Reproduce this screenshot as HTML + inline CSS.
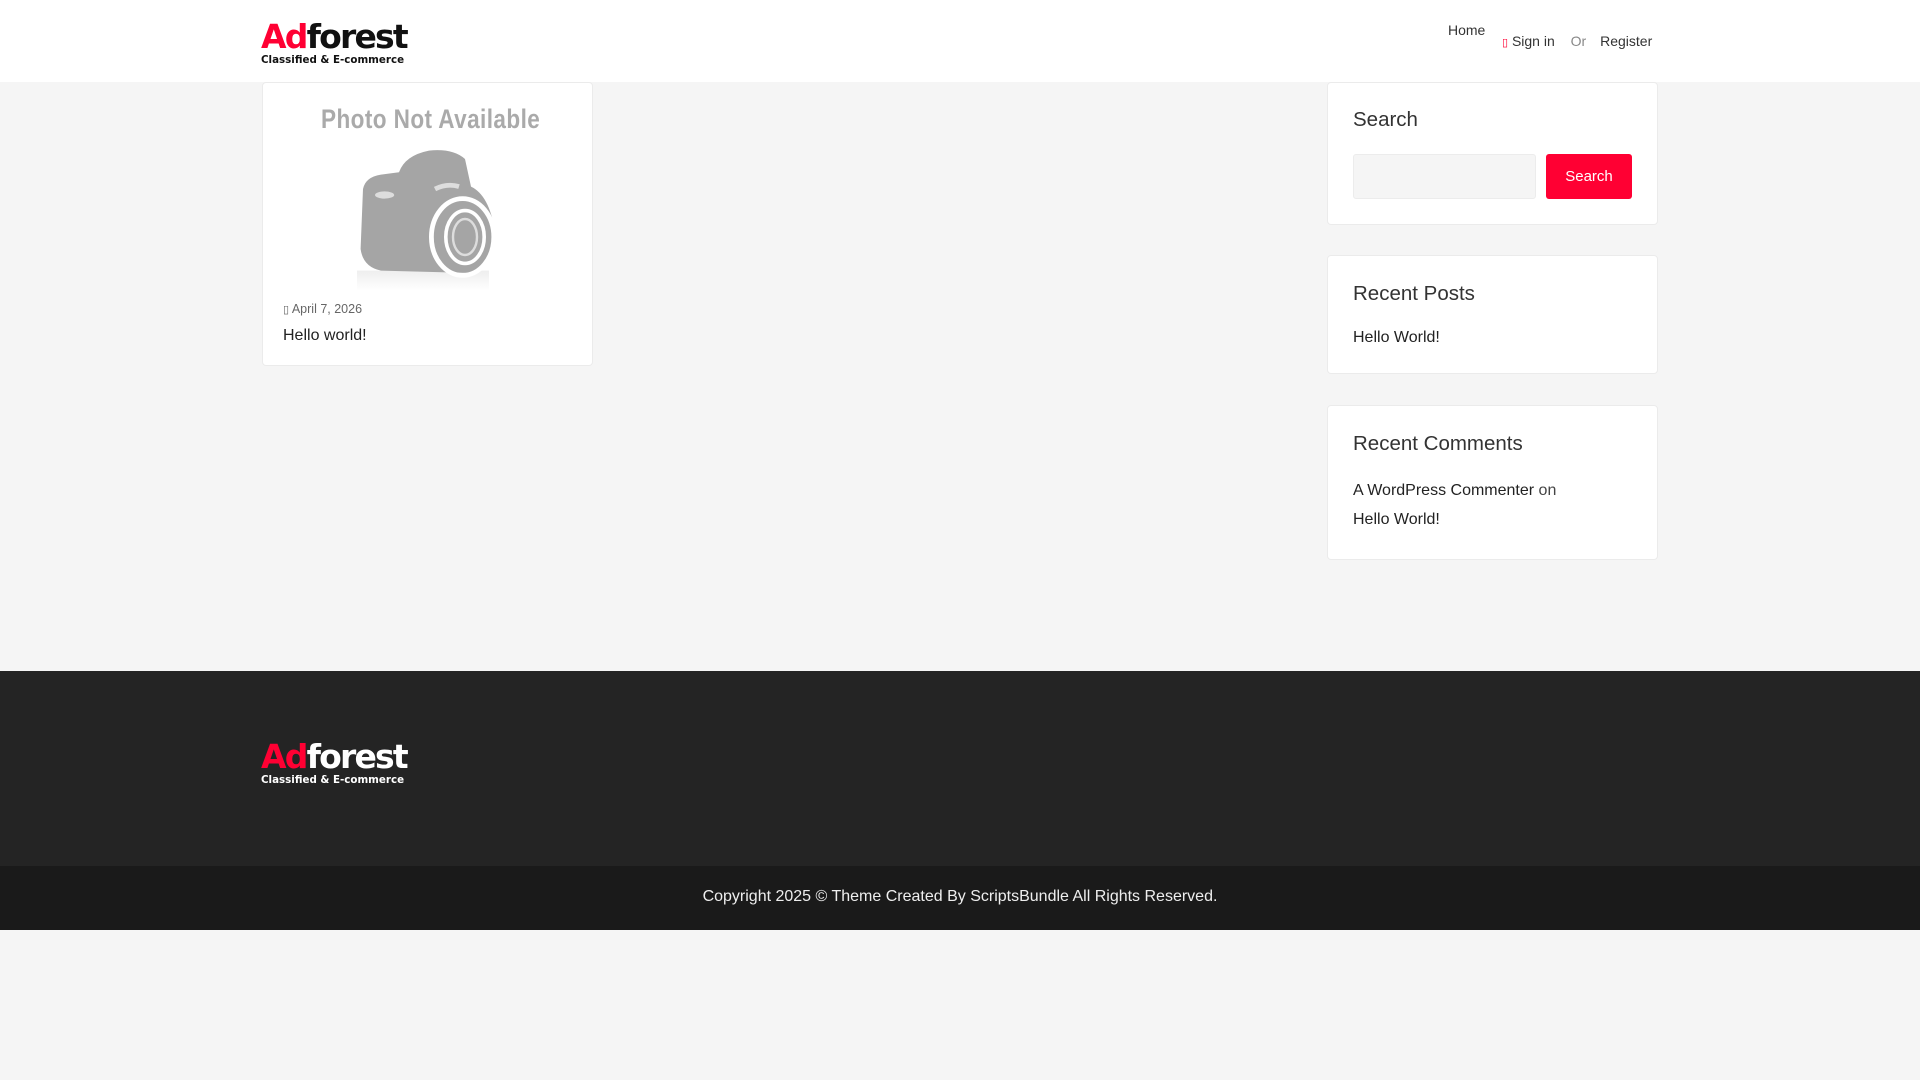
<!DOCTYPE html>
<html><head><meta charset="utf-8"><style>
*{margin:0;padding:0;box-sizing:border-box}
body{width:1920px;height:1080px;background:#f5f5f5;font-family:"Liberation Sans",Arial,sans-serif;position:relative;overflow:hidden;color:#222}
.a{position:absolute;white-space:nowrap}
.card{position:absolute;background:#fff;border:1px solid #ebebeb;border-radius:4px}
.logo .t{font-family:"DejaVu Sans",sans-serif;font-weight:bold;font-size:33px;letter-spacing:-1.8px;line-height:30px}
.logo .s{font-family:"DejaVu Sans",sans-serif;font-size:10.3px;line-height:13px;font-weight:bold;letter-spacing:0px;margin-top:2px}
h3{font-weight:normal;font-size:20.5px;color:#333;position:absolute;white-space:nowrap}
.lk{font-size:16px;color:#222;position:absolute;white-space:nowrap}
</style></head><body>
<div class="a" style="left:0;top:0;width:1920px;height:82px;background:#fff"></div>
<div class="a logo" style="left:261px;top:22px">
<div class="t"><span style="color:#ff0033">Ad</span><span style="color:#111">forest</span></div>
<div class="s" style="color:#111">Classified &amp; E-commerce</div></div>
<div class="a" style="left:1448px;top:22px;font-size:14px;color:#333">Home</div>
<div class="a" style="left:1502px;top:33px;font-size:14px;color:#333"><span style="color:#ff0033;font-size:11px">▯</span> Sign in <span style="color:#888;margin:0 10px 0 12px">Or</span> Register</div>

<div class="card" style="left:262px;top:82px;width:331px;height:284px"></div>
<div class="a" style="left:321px;top:104px;font-size:27px;font-weight:bold;color:#aaa;transform:scaleX(0.835);transform-origin:left;letter-spacing:0.5px">Photo Not Available</div>
<svg class="a" style="left:339px;top:141px" width="168" height="150" viewBox="0 0 140 125">
<defs><linearGradient id="g" x1="0" y1="0" x2="0" y2="1"><stop offset="0" stop-color="#eee"/><stop offset="1" stop-color="#fff"/></linearGradient></defs>
<rect x="15" y="108" width="110" height="17" fill="url(#g)"/>
<path d="M20 40 Q22 30 35 28 L50 26 Q55 12 75 8 Q95 6 105 15 L110 38 Q125 45 130 75 Q128 105 110 110 L35 108 Q20 105 18 90 Z" fill="#a5a5a5"/>
<ellipse cx="103" cy="80" rx="26" ry="32" fill="none" stroke="#fff" stroke-width="4"/>
<ellipse cx="105" cy="80" rx="16" ry="22" fill="none" stroke="#fff" stroke-width="3"/>
<ellipse cx="105" cy="80" rx="10" ry="15" fill="#a5a5a5" stroke="#ddd" stroke-width="2"/>
<ellipse cx="38" cy="45" rx="8" ry="3" fill="#ddd"/>
<path d="M80 40 Q90 35 100 38" stroke="#ddd" stroke-width="4" fill="none"/>
</svg>
<div class="a" style="left:283px;top:302px;font-size:12.5px;color:#666"><span style="font-size:11px">▯</span> April 7, 2026</div>
<div class="a" style="left:283px;top:327px;font-size:16px;color:#222">Hello world!</div>

<div class="card" style="left:1327px;top:82px;width:331px;height:143px"></div>
<h3 style="left:1353px;top:108px">Search</h3>
<div class="a" style="left:1353px;top:154px;width:183px;height:45px;background:#f5f5f5;border:1px solid #ececec;border-radius:3px"></div>
<div class="a" style="left:1546px;top:154px;width:86px;height:45px;background:#ff0033;border-radius:3px;color:#fff;font-size:15px;text-align:center;line-height:45px">Search</div>

<div class="card" style="left:1327px;top:255px;width:331px;height:119px"></div>
<h3 style="left:1353px;top:282px">Recent Posts</h3>
<div class="lk" style="left:1353px;top:329px">Hello World!</div>

<div class="card" style="left:1327px;top:405px;width:331px;height:155px"></div>
<h3 style="left:1353px;top:432px">Recent Comments</h3>
<div class="lk" style="left:1353px;top:482px">A WordPress Commenter <span style="color:#444">on</span></div>
<div class="lk" style="left:1353px;top:511px">Hello World!</div>

<div class="a" style="left:0;top:671px;width:1920px;height:195px;background:#242424"></div>
<div class="a logo" style="left:261px;top:742px">
<div class="t"><span style="color:#ff0033">Ad</span><span style="color:#fff">forest</span></div>
<div class="s" style="color:#fff">Classified &amp; E-commerce</div></div>
<div class="a" style="left:0;top:866px;width:1920px;height:64px;background:#1a1a1a"></div>
<div class="a" style="left:0;top:888px;width:1920px;text-align:center;font-size:16px;color:#eee">Copyright 2025 © Theme Created By ScriptsBundle All Rights Reserved.</div>
</body></html>
